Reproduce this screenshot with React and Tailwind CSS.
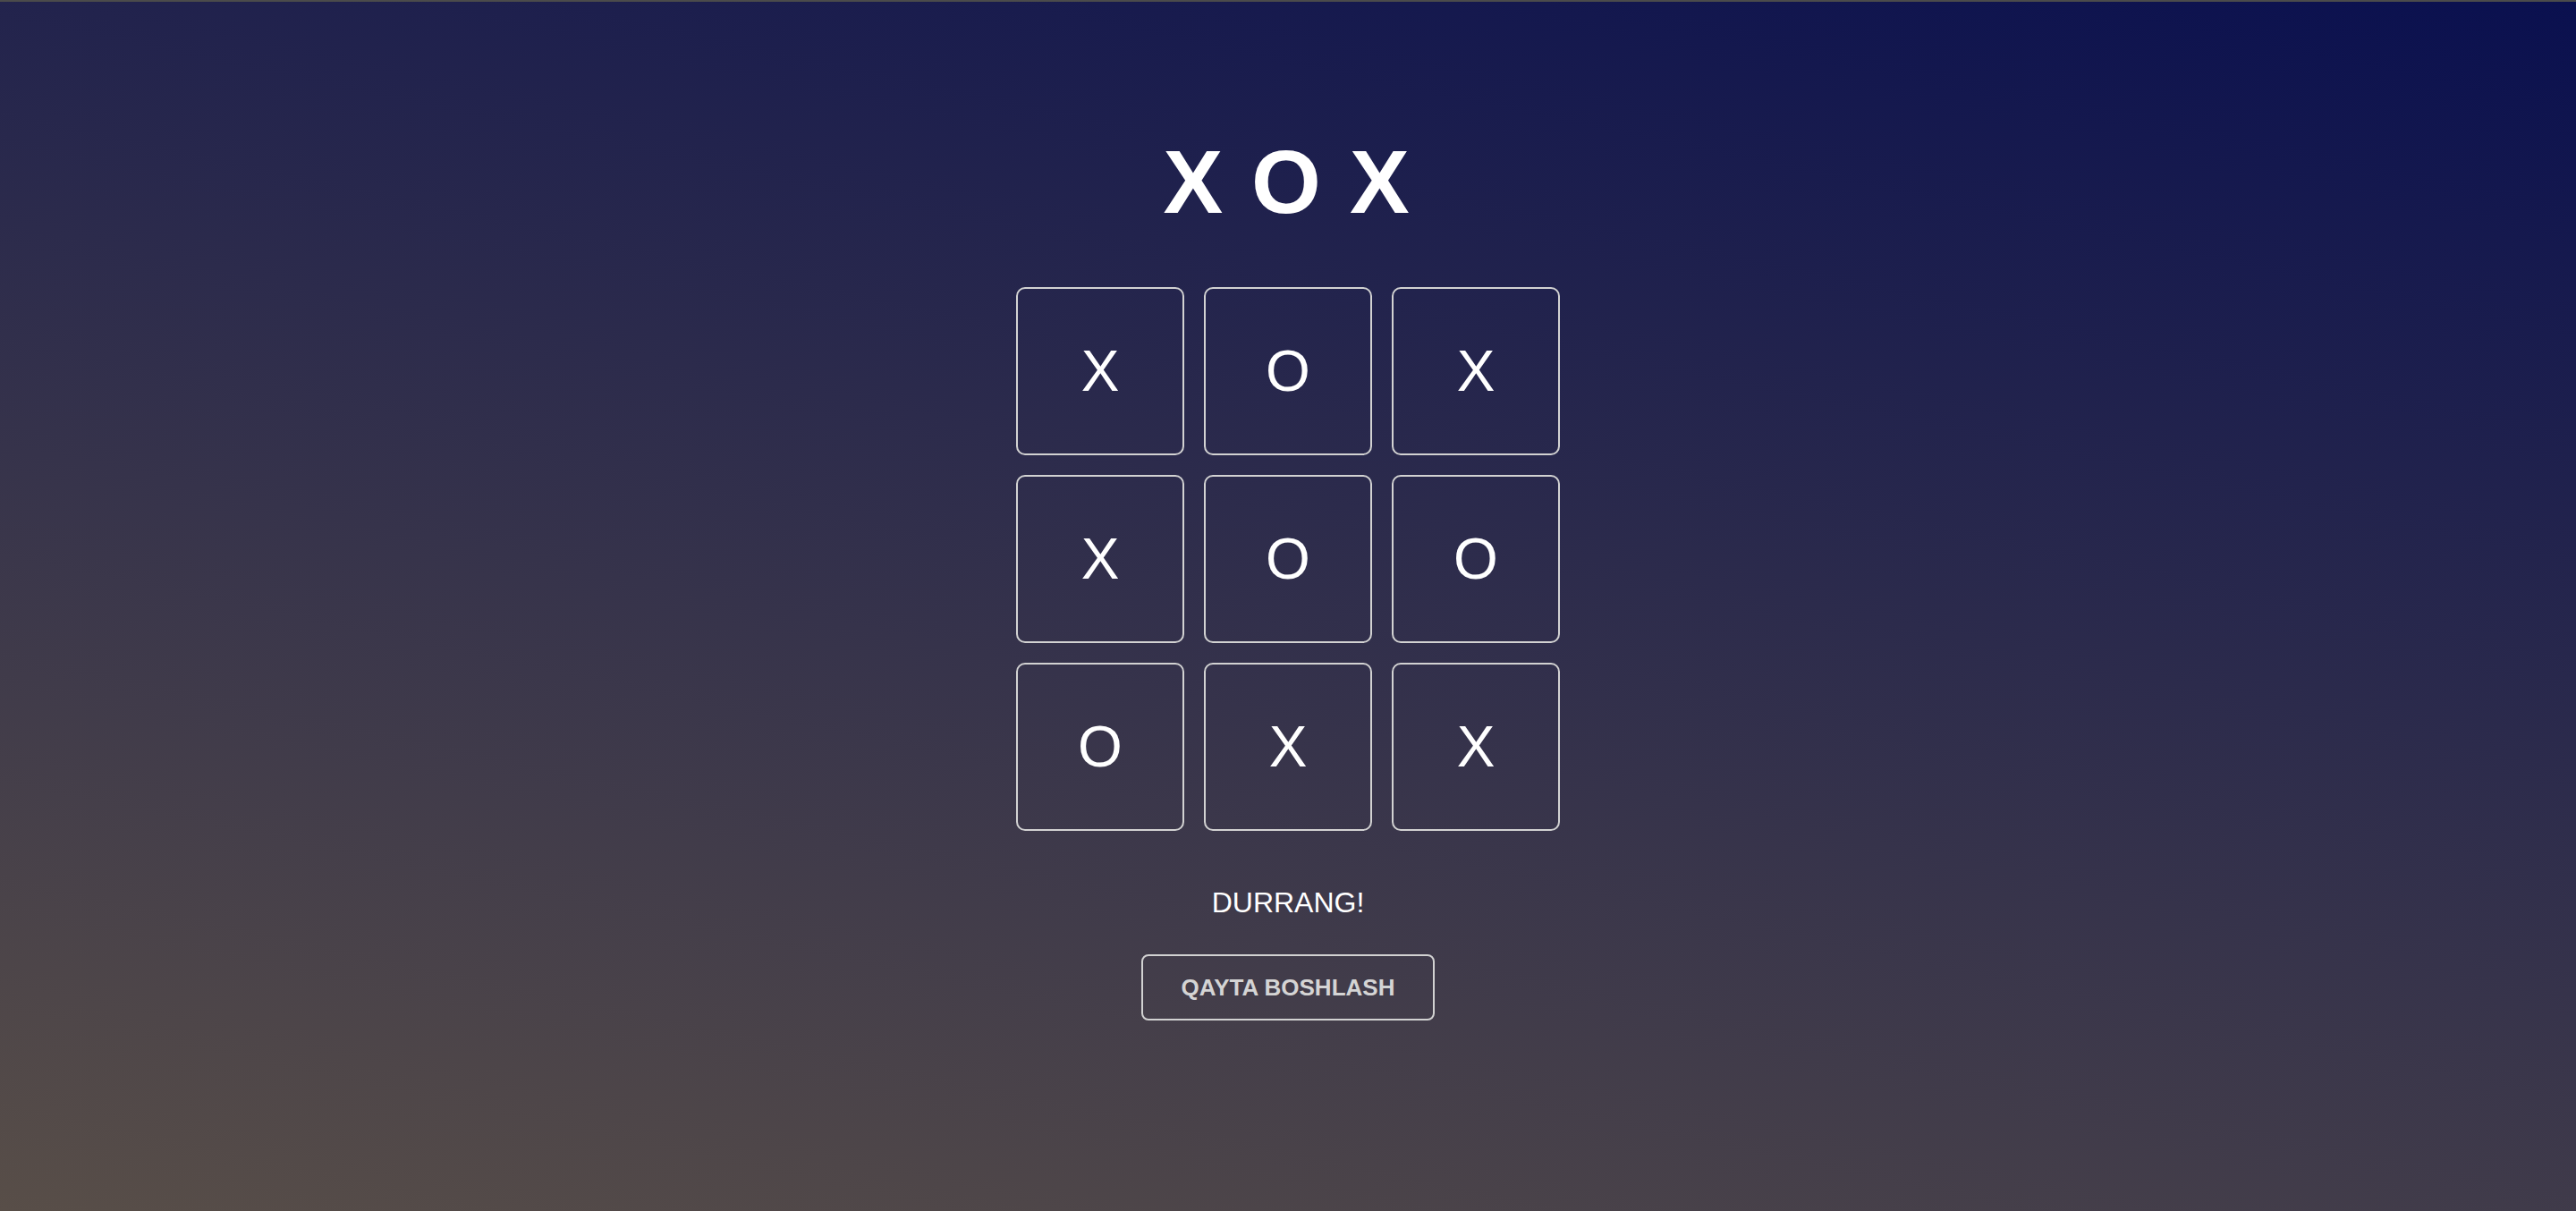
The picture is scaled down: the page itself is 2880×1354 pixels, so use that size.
const BOARD = ["X", "O", "X", "X", "O", "O", "O", "X", "X"];

function Cell({ value }) {
  return (
    <button
      type="button"
      className="flex h-[188px] w-[188px] items-center justify-center rounded-[10px] border-2 border-[#d2d2d2] bg-transparent text-[64px] leading-none font-normal text-white"
    >
      {value}
    </button>
  );
}

export default function App() {
  return (
    <div className="flex h-[1354px] w-full flex-col items-center overflow-hidden border-t-2 border-[#4b4b4b] bg-[linear-gradient(12deg,#584e48,#0a104f)] font-['Liberation_Sans',Arial,sans-serif]">
      <h1 className="mt-[151px] pl-[28px] text-[100px] leading-none font-bold tracking-[32px] text-white">
        XOX
      </h1>

      <div className="mt-[68px] grid grid-cols-3 gap-[22px]">
        {BOARD.map((v, i) => (
          <Cell key={i} value={v} />
        ))}
      </div>

      <p className="mt-[64px] text-[32px] leading-none text-white">DURRANG!</p>

      <button
        type="button"
        className="mt-[42px] rounded-[8px] border-2 border-[#d2d2d2] px-[43px] py-[22px] text-[26px] leading-none font-bold text-[#d4d4d4]"
      >
        QAYTA BOSHLASH
      </button>
    </div>
  );
}
